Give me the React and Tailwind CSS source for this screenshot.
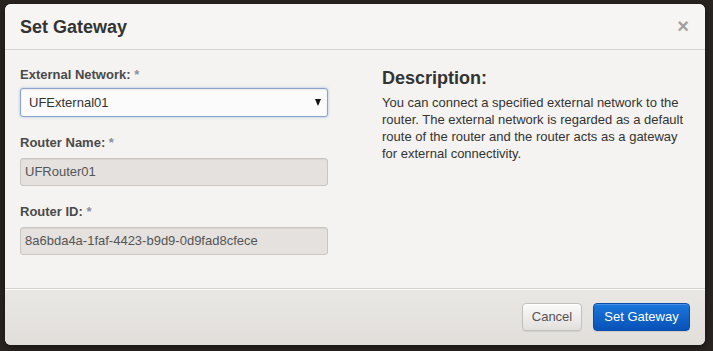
import React from "react";

export default function App() {
  const font = "font-['Liberation_Sans',Arial,sans-serif]";
  return (
    <div className={`w-[713px] h-[351px] bg-[#2a2421] pt-[4px] pl-[5px] ${font}`}>
      <div className="w-[700px] h-[341px] rounded-[6px] bg-[#f4f3f1] flex flex-col overflow-hidden shadow-[0_2px_8px_rgba(0,0,0,0.5)]">
        {/* header */}
        <div className="h-[46px] shrink-0 flex items-center justify-between pl-[15px] pr-[16px] border-b border-[#d6d4d1] bg-[#f6f5f3]">
          <h3 className="text-[18px] leading-[20px] font-bold text-[#333]">Set Gateway</h3>
          <span className="text-[20px] leading-none font-bold text-[#a3a19f] -mt-[2px]">×</span>
        </div>
        {/* body */}
        <div className="flex-1 flex pt-[16px] pl-[15px]">
          <div className="w-[308px] flex flex-col">
            <label className="h-[18px] text-[13px] leading-[18px] font-bold text-[#4a4a4a] mb-[4px]">
              External Network: <span className="text-[#8a8fa0] font-bold">*</span>
            </label>
            <div className="h-[29px] rounded-[3px] border border-[#8ca3cc] bg-[#fbfbfb] shadow-[inset_0_1px_2px_rgba(0,0,0,0.08),0_0_3px_rgba(82,120,190,0.45)] flex items-center justify-between pl-[8px] pr-[6px]">
              <span className="text-[13px] text-[#333]">UFExternal01</span>
              <svg width="6" height="7" viewBox="0 0 6 7">
                <path d="M0 0 L6 0 L3 7 Z" fill="#111" />
              </svg>
            </div>
            <label className="mt-[17px] h-[18px] text-[13px] leading-[18px] font-bold text-[#4a4a4a] mb-[6px]">
              Router Name: <span className="text-[#8a8fa0]">*</span>
            </label>
            <div className="h-[28px] rounded-[3px] border border-[#c9c6c2] bg-[#e4e1de] shadow-[inset_0_1px_1px_rgba(0,0,0,0.06)] flex items-center pl-[4px]">
              <span className="text-[13px] text-[#555]">UFRouter01</span>
            </div>
            <label className="mt-[17px] h-[18px] text-[13px] leading-[18px] font-bold text-[#4a4a4a] mb-[6px]">
              Router ID: <span className="text-[#8a8fa0]">*</span>
            </label>
            <div className="h-[28px] rounded-[3px] border border-[#c9c6c2] bg-[#e4e1de] shadow-[inset_0_1px_1px_rgba(0,0,0,0.06)] flex items-center pl-[4px]">
              <span className="text-[13px] text-[#555]">8a6bda4a-1faf-4423-b9d9-0d9fad8cfece</span>
            </div>
          </div>
          <div className="ml-[54px] w-[310px] pt-[2px]">
            <h3 className="text-[18px] leading-[20px] font-bold text-[#333] mb-[6px]">Description:</h3>
            <p className="text-[13px] leading-[17px] text-[#333]">
              You can connect a specified external network to the router. The external network is regarded as a default route of the router and the router acts as a gateway for external connectivity.
            </p>
          </div>
        </div>
        {/* footer */}
        <div className="h-[57px] shrink-0 border-t border-[#d3d0cc] shadow-[inset_0_1px_0_#ffffff] bg-gradient-to-b from-[#e9e7e4] to-[#e2dfdb] flex items-center justify-end pr-[15px] gap-[11px]">
          <button className="h-[28px] w-[60px] rounded-[4px] border border-[#c4c1bd] bg-gradient-to-b from-[#fbfbfb] to-[#e2e0dd] text-[13px] text-[#555] shadow-[inset_0_1px_0_rgba(255,255,255,0.8),0_1px_1px_rgba(0,0,0,0.08)]">
            Cancel
          </button>
          <button className="h-[28px] w-[97px] rounded-[4px] border border-[#0a4ca8] bg-gradient-to-b from-[#1b76dc] to-[#0852b8] text-[13px] text-white shadow-[inset_0_1px_0_rgba(255,255,255,0.2),0_1px_1px_rgba(0,0,0,0.1)]">
            Set Gateway
          </button>
        </div>
      </div>
    </div>
  );
}
